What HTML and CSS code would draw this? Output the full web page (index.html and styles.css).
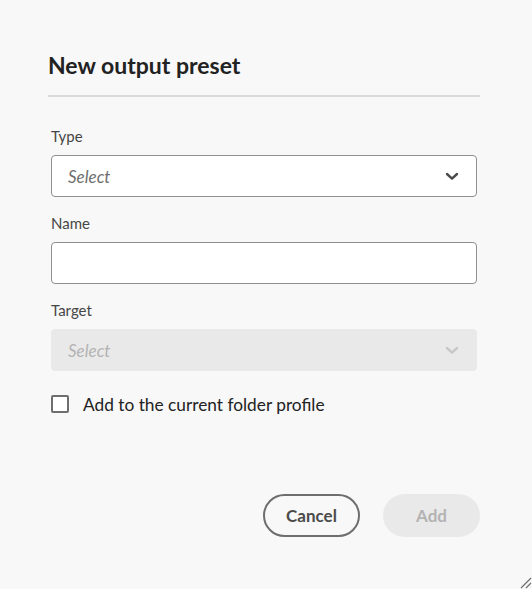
FILE: index.html
```html
<!DOCTYPE html>
<html lang="en">
<head>
<meta charset="utf-8">
<title>New output preset</title>
<link rel="stylesheet" href="styles.css">
</head>
<body>
<div class="dialog">
  <h2 class="title">New output preset</h2>
  <div class="divider"></div>
  <form class="form">
    <div class="field">
      <label class="label">Type</label>
      <div class="picker">
        <span class="placeholder">Select</span>
        <svg class="chev" width="14" height="9" viewBox="0 0 14 9"><path d="M2 2 L7 6.6 L12 2" fill="none" stroke="#4b4b4b" stroke-width="2.4" stroke-linecap="round" stroke-linejoin="round"/></svg>
      </div>
    </div>
    <div class="field">
      <label class="label">Name</label>
      <div class="textbox"></div>
    </div>
    <div class="field">
      <label class="label">Target</label>
      <div class="picker disabled">
        <span class="placeholder">Select</span>
        <svg class="chev" width="14" height="9" viewBox="0 0 14 9"><path d="M2 2 L7 6.6 L12 2" fill="none" stroke="#c8c8c8" stroke-width="2.4" stroke-linecap="round" stroke-linejoin="round"/></svg>
      </div>
    </div>
    <div class="check-row">
      <span class="checkbox"></span>
      <span class="check-label">Add to the current folder profile</span>
    </div>
  </form>
  <div class="buttons">
    <button class="btn btn-secondary" type="button">Cancel</button>
    <button class="btn btn-disabled" type="button">Add</button>
  </div>
  <svg class="grip" width="14" height="12" viewBox="0 0 14 12"><path d="M3 11 L13 1 M8 11 L13 6" stroke="#6e6e6e" stroke-width="1.2" fill="none"/></svg>
</div>
</body>
</html>
```

FILE: styles.css
```css
html, body {
  margin: 0;
  padding: 0;
  background: #f8f8f8;
  height: 100%;
}
body {
  font-family: Lato, "Open Sans", sans-serif;
  color: #222;
}
.dialog {
  position: relative;
  box-sizing: border-box;
  height: 589px;
  width: 532px;
  padding: 51px 52px 0 48px;
}
.title {
  margin: 0;
  font-size: 23px;
  line-height: 28px;
  font-weight: 700;
  color: #222;
}
.divider {
  margin-top: 16px;
  height: 2px;
  background: #dadada;
}
.form {
  padding: 0 3px;
  margin-top: 31px;
}
.field {
  display: flex;
  flex-direction: column;
  margin-bottom: 18px;
}
.label {
  font-size: 15px;
  line-height: 17px;
  color: #464646;
  margin-bottom: 10px;
}
.picker, .textbox {
  box-sizing: border-box;
  height: 42px;
  border: 1px solid #8f8f8f;
  border-radius: 4px;
  background: #fff;
}
.picker {
  display: flex;
  align-items: center;
  justify-content: space-between;
  padding: 0 17px 0 16px;
}
.placeholder {
  font-style: italic;
  font-size: 17px;
  color: #6e6e6e;
}
.picker.disabled {
  background: #e9e9e9;
  border-color: #e9e9e9;
}
.picker.disabled .placeholder {
  color: #b3b3b3;
}
.check-row {
  display: flex;
  align-items: center;
  gap: 14px;
  margin-top: 21px;
  height: 24px;
}
.checkbox {
  box-sizing: border-box;
  width: 18px;
  height: 18px;
  border: 2px solid #6e6e6e;
  border-radius: 2px;
  background: #fff;
}
.check-label {
  font-size: 17.3px;
  color: #222;
}
.buttons {
  display: flex;
  justify-content: flex-end;
  gap: 23px;
  margin-top: 78px;
}
.btn {
  box-sizing: border-box;
  height: 43px;
  width: 97px;
  border-radius: 22px;
  font-family: Lato, "Open Sans", sans-serif;
  font-size: 17px;
  font-weight: 700;
  padding: 0;
}
.btn-secondary {
  background: transparent;
  border: 2px solid #6e6e6e;
  color: #4b4b4b;
}
.btn-disabled {
  background: #e9e9e9;
  border: none;
  color: #b3b3b3;
}
.grip {
  position: absolute;
  right: 0;
  bottom: 0;
}
```
